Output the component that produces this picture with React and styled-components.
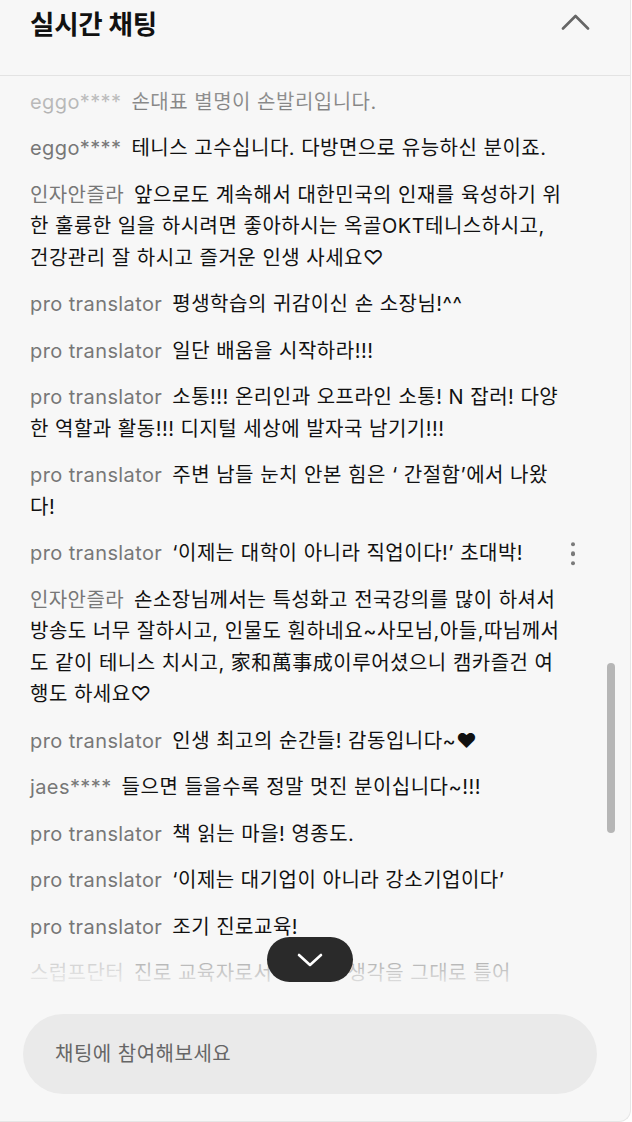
import React from "react";
import styled, { createGlobalStyle } from "styled-components";

const GlobalStyle = createGlobalStyle`
  html, body {
    margin: 0;
    padding: 0;
    background: #ffffff;
  }
  body {
    font-family: "Inter", "Noto Sans CJK KR", sans-serif;
  }
`;

const Panel = styled.div`
  width: 630px;
  height: 1121px;
  display: flex;
  flex-direction: column;
  background: #f7f7f7;
  border-right: 1px solid #e6e6e6;
  border-bottom: 1px solid #e6e6e6;
  border-bottom-right-radius: 12px;
  overflow: hidden;
`;

const Header = styled.div`
  height: 76px;
  box-sizing: border-box;
  flex-shrink: 0;
  display: flex;
  justify-content: space-between;
  align-items: flex-start;
  padding: 7px 40px 0 30px;
  border-bottom: 1px solid #e3e3e3;
`;

const Title = styled.h2`
  margin: 0;
  font-size: 26.5px;
  line-height: 34px;
  font-weight: 700;
  color: #111;
  letter-spacing: -0.2px;
`;

const IconButton = styled.button`
  border: none;
  background: none;
  padding: 0;
  margin-top: 7px;
  display: flex;
  cursor: pointer;
`;

const ListWrap = styled.div`
  position: relative;
  flex: 1;
  min-height: 0;
`;

const MessageList = styled.div`
  height: 100%;
  overflow: hidden;
  padding: 3px 40px 0 30px;
  box-sizing: border-box;
`;

const Row = styled.div`
  position: relative;
  padding: 7.5px 26px 7.5px 0;
  font-size: 20px;
  line-height: 31.5px;
  letter-spacing: 0.5px;
  color: #111;
`;

const Name = styled.span`
  color: #777;
  letter-spacing: 0.4px;
  margin-right: 10px;
`;

const Kebab = styled.div`
  position: absolute;
  right: 15px;
  top: 50%;
  transform: translateY(-50%);
  display: flex;
  flex-direction: column;
  gap: 5px;
`;

const Dot = styled.span`
  width: 4.5px;
  height: 4.5px;
  border-radius: 50%;
  background: #7a7a7a;
`;

const Fade = styled.div`
  position: absolute;
  left: 0;
  right: 0;
  pointer-events: none;
  ${({ $bottom }) =>
    $bottom
      ? `bottom: 0; height: 42px; background: linear-gradient(rgba(247,247,247,0.55), rgba(247,247,247,0.92));`
      : `top: 0; height: 44px; background: linear-gradient(rgba(247,247,247,0.62), rgba(247,247,247,0.45));`}
`;

const ScrollThumb = styled.div`
  position: absolute;
  right: 15px;
  top: 587px;
  width: 8px;
  height: 170px;
  border-radius: 4px;
  background: #b6b6b6;
`;

const ScrollDown = styled.button`
  position: absolute;
  left: 267px;
  bottom: 4px;
  width: 86px;
  height: 45px;
  border: none;
  border-radius: 23px;
  background: #2a2a2a;
  display: flex;
  align-items: center;
  justify-content: center;
  cursor: pointer;
`;

const Footer = styled.div`
  flex-shrink: 0;
  padding: 28px 33px 27px 23px;
`;

const Input = styled.input`
  width: 100%;
  height: 80px;
  box-sizing: border-box;
  border: none;
  outline: none;
  border-radius: 40px;
  background: #eaeaea;
  padding: 0 32px;
  font-family: "Inter", "Noto Sans CJK KR", sans-serif;
  font-size: 20px;
  letter-spacing: 0.5px;
  color: #111;
  &::placeholder {
    color: #666;
  }
`;

const messages = [
  { name: "eggo****", text: "손대표 별명이 손발리입니다." },
  { name: "eggo****", text: "테니스 고수십니다. 다방면으로 유능하신 분이죠." },
  {
    name: "인자안즐라",
    text: "앞으로도 계속해서 대한민국의 인재를 육성하기 위한 훌륭한 일을 하시려면 좋아하시는 옥골OKT테니스하시고, 건강관리 잘 하시고 즐거운 인생 사세요♡",
  },
  { name: "pro translator", text: "평생학습의 귀감이신 손 소장님!^^" },
  { name: "pro translator", text: "일단 배움을 시작하라!!!" },
  {
    name: "pro translator",
    text: "소통!!! 온리인과 오프라인 소통! N 잡러! 다양한 역할과 활동!!! 디지털 세상에 발자국 남기기!!!",
  },
  { name: "pro translator", text: "주변 남들 눈치 안본 힘은 ‘ 간절함’에서 나왔다!" },
  { name: "pro translator", text: "‘이제는 대학이 아니라 직업이다!’ 초대박!", menu: true },
  {
    name: "인자안즐라",
    text: "손소장님께서는 특성화고 전국강의를 많이 하셔서 방송도 너무 잘하시고, 인물도 훤하네요~사모님,아들,따님께서도 같이 테니스 치시고, 家和萬事成이루어셨으니 캠카즐건 여행도 하세요♡",
  },
  { name: "pro translator", text: "인생 최고의 순간들! 감동입니다~♥" },
  { name: "jaes****", text: "들으면 들을수록 정말 멋진 분이십니다~!!!" },
  { name: "pro translator", text: "책 읽는 마을! 영종도." },
  { name: "pro translator", text: "‘이제는 대기업이 아니라 강소기업이다’" },
  { name: "pro translator", text: "조기 진로교육!" },
  { name: "스럽프단터", text: "진로 교육자로서 저는 제 생각을 그대로 틀어" },
];

const ChevronUp = () => (
  <svg width="29" height="16" viewBox="0 0 29 16" fill="none">
    <polyline points="2,14.5 14.5,2 27,14.5" stroke="#666" strokeWidth="2.6" strokeLinecap="round" strokeLinejoin="round" />
  </svg>
);

const ChevronDown = () => (
  <svg width="26" height="14" viewBox="0 0 26 14" fill="none">
    <polyline points="2,2 13,12 24,2" stroke="#fff" strokeWidth="2.6" strokeLinecap="round" strokeLinejoin="round" />
  </svg>
);

const App = () => {
  return (
    <>
      <GlobalStyle />
      <Panel>
        <Header>
          <Title>실시간 채팅</Title>
          <IconButton aria-label="채팅 접기">
            <ChevronUp />
          </IconButton>
        </Header>

        <ListWrap>
          <MessageList>
            {messages.map((m, i) => (
              <Row key={i}>
                <Name>{m.name}</Name>
                {m.text}
                {m.menu && (
                  <Kebab>
                    <Dot />
                    <Dot />
                    <Dot />
                  </Kebab>
                )}
              </Row>
            ))}
          </MessageList>
          <Fade />
          <Fade $bottom />
          <ScrollThumb />
          <ScrollDown aria-label="최신 채팅으로 이동">
            <ChevronDown />
          </ScrollDown>
        </ListWrap>

        <Footer>
          <Input placeholder="채팅에 참여해보세요" />
        </Footer>
      </Panel>
    </>
  );
};

export default App;
